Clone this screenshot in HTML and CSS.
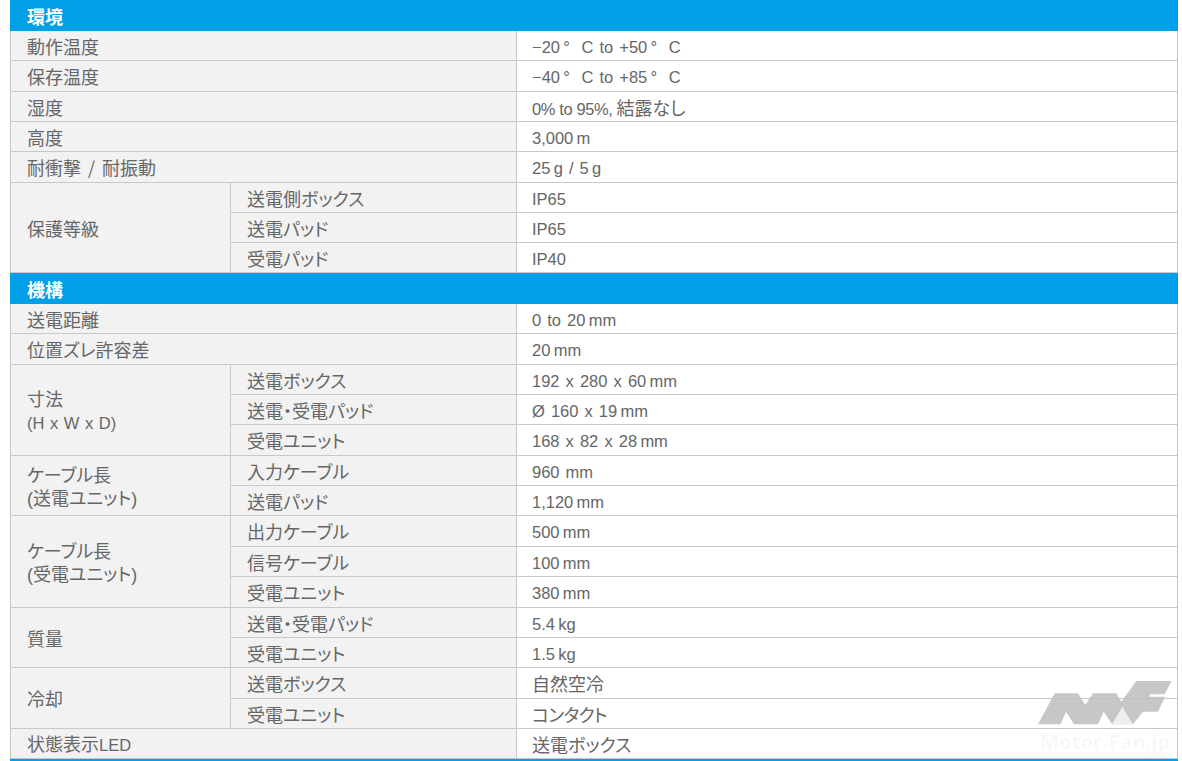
FILE: index.html
```html
<!DOCTYPE html>
<html lang="ja">
<head>
<meta charset="utf-8">
<title>仕様</title>
<link rel="stylesheet" href="styles.css">
</head>
<body>
<main class="spec">
  <div class="section">環境</div>
  <div class="cell label wide">動作温度</div><div class="cell value">−20&thinsp;°&ensp;&thinsp;C to +50&thinsp;°&ensp;&thinsp;C</div>
  <div class="cell label wide">保存温度</div><div class="cell value">−40&thinsp;°&ensp;&thinsp;C to +85&thinsp;°&ensp;&thinsp;C</div>
  <div class="cell label wide">湿度</div><div class="cell value compact">0% to 95%, <span class="ja">結露なし</span></div>
  <div class="cell label wide">高度</div><div class="cell value">3,000&thinsp;m</div>
  <div class="cell label wide">耐衝撃 / 耐振動</div><div class="cell value">25&thinsp;g / 5&thinsp;g</div>
  <div class="cell label r3">保護等級</div>
  <div class="cell sub">送電側ボックス</div><div class="cell value">IP65</div>
  <div class="cell sub">送電パッド</div><div class="cell value">IP65</div>
  <div class="cell sub">受電パッド</div><div class="cell value">IP40</div>
  <div class="section">機構</div>
  <div class="cell label wide">送電距離</div><div class="cell value">0 to 20&thinsp;mm</div>
  <div class="cell label wide">位置ズレ許容差</div><div class="cell value">20&thinsp;mm</div>
  <div class="cell label r3">寸法<br><span class="latin">(H x W x D)</span></div>
  <div class="cell sub">送電ボックス</div><div class="cell value">192 x 280 x 60&thinsp;mm</div>
  <div class="cell sub">送電・受電パッド</div><div class="cell value">Ø 160 x 19&thinsp;mm</div>
  <div class="cell sub">受電ユニット</div><div class="cell value">168 x 82 x 28&thinsp;mm</div>
  <div class="cell label r2 duo">ケーブル長<br>(送電ユニット)</div>
  <div class="cell sub">入力ケーブル</div><div class="cell value">960 mm</div>
  <div class="cell sub">送電パッド</div><div class="cell value">1,120&thinsp;mm</div>
  <div class="cell label r3 duo">ケーブル長<br>(受電ユニット)</div>
  <div class="cell sub">出力ケーブル</div><div class="cell value">500&thinsp;mm</div>
  <div class="cell sub">信号ケーブル</div><div class="cell value">100&thinsp;mm</div>
  <div class="cell sub">受電ユニット</div><div class="cell value">380&thinsp;mm</div>
  <div class="cell label r2">質量</div>
  <div class="cell sub">送電・受電パッド</div><div class="cell value">5.4&thinsp;kg</div>
  <div class="cell sub">受電ユニット</div><div class="cell value">1.5&thinsp;kg</div>
  <div class="cell label r2">冷却</div>
  <div class="cell sub">送電ボックス</div><div class="cell value"><span class="ja">自然空冷</span></div>
  <div class="cell sub">受電ユニット</div><div class="cell value"><span class="ja kana">コンタクト</span></div>
  <div class="cell label wide">状態表示<span class="latin">LED</span></div><div class="cell value"><span class="ja">送電ボックス</span></div>
  <div class="foot"></div>
</main>
<div class="mark">
  <svg class="mark-logo" width="136" height="44" viewBox="0 0 136 44" aria-hidden="true">
    <path class="mark-dark" d="M0 43.300 16.700 12.300H40L47.300 24 55 12.300H78.300L83.300 20.700 98.300 0H133.700L126.700 13.300H112.300L111 15.700H127L120 30.700H105L95 43.300H74L65.700 30.700 60 43.300H36L28 30.700 22.700 43.300Z"/>
    <path class="mark-light" d="M74 43.300 84.300 25.700 95 43.300Z"/>
  </svg>
  <span class="mark-text">Motor-Fan.jp</span>
</div>
</body>
</html>
```

FILE: styles.css
```css
html, body {
  margin: 0;
  padding: 0;
  height: 761px;
  overflow: hidden;
  background: #fff;
}

body {
  position: relative;
  padding-left: 10px;
  font-family: "Noto Sans CJK JP", "Noto Sans", sans-serif;
  font-size: 18px;
  font-feature-settings: "palt";
  color: #666;
}

.spec {
  width: 1168px;
  display: grid;
  grid-template-columns: 220px 286px 662px;
  grid-template-rows: 31px 30px 31px 30px 30px 31px 30px 30px 30px 31px 30px 31px 30px 30px 31px 30px 30px 31px 30px 31px 30px 30px 31px 30px 30px 2px;
}

.section {
  grid-column: 1 / -1;
  display: flex;
  align-items: center;
  padding-left: 17px;
  background: #009fe8;
  color: #fff;
  font-weight: 700;
}

.foot {
  grid-column: 1 / -1;
  background: #009fe8;
}

.cell {
  display: block;
  align-content: center;
  line-height: 23px;
  padding-top: 1px;
  border-bottom: 1px solid #c8c8c8;
  border-left: 1px solid #c8c8c8;
  padding-left: 16px;
  white-space: nowrap;
  word-spacing: 3px;
}

.label, .sub { background: #f2f2f2; }
.wide { grid-column: span 2; }
.r2 { grid-row: span 2; }
.r3 { grid-row: span 3; }

.duo {
  padding-top: 5px;
  font-family: "Liberation Sans", "Noto Sans CJK JP", sans-serif;
}

.value {
  grid-column: 3;
  padding-top: 3px;
  padding-left: 15px;
  border-right: 1px solid #c8c8c8;
  font-family: "Liberation Sans", sans-serif;
  font-size: 16.500px;
  word-spacing: 1.500px;
}

.compact {
  word-spacing: 0;
  letter-spacing: -.4px;
}

.latin {
  font-family: "Liberation Sans", sans-serif;
  font-size: 16.500px;
  word-spacing: 1px;
}

.ja {
  font-family: "Noto Sans CJK JP", sans-serif;
  font-size: 18px;
  letter-spacing: 0;
}

.kana { letter-spacing: -.8px; }

.mark {
  position: absolute;
  left: 1038px;
  top: 681px;
  width: 136px;
}

.mark-logo { display: block; }
.mark-dark { fill: #bdbdbd; fill-opacity: .85; }
.mark-light { fill: #eee; }

.mark-text {
  display: block;
  margin: 3px 0 0 2px;
  font-family: "Open Sans", sans-serif;
  font-weight: 700;
  font-size: 20.300px;
  line-height: 26px;
  color: rgba(0,0,0,.04);
  white-space: nowrap;
}
```
